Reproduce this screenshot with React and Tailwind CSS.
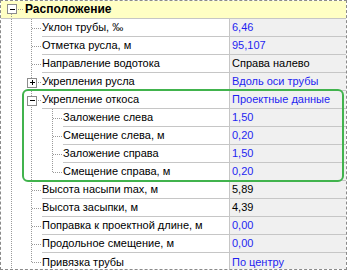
import React from 'react';

const rows = [
  { level: 1, name: 'Уклон трубы, ‰', value: '6,46', blue: true },
  { level: 1, name: 'Отметка русла, м', value: '95,107', blue: true },
  { level: 1, name: 'Направление водотока', value: 'Справа налево' },
  { level: 1, name: 'Укрепления русла', value: 'Вдоль оси трубы', blue: true, box: 'plus' },
  { level: 1, name: 'Укрепление откоса', value: 'Проектные данные', blue: true, box: 'minus' },
  { level: 2, name: 'Заложение слева', value: '1,50', blue: true },
  { level: 2, name: 'Смещение слева, м', value: '0,20', blue: true },
  { level: 2, name: 'Заложение справа', value: '1,50', blue: true },
  { level: 2, name: 'Смещение справа, м', value: '0,20', blue: true, last: true },
  { level: 1, name: 'Высота насыпи max, м', value: '5,89' },
  { level: 1, name: 'Высота засыпки, м', value: '4,39' },
  { level: 1, name: 'Поправка к проектной длине, м', value: '0,00', blue: true },
  { level: 1, name: 'Продольное смещение, м', value: '0,00', blue: true },
  { level: 1, name: 'Привязка трубы', value: 'По центру', blue: true, last: true },
];

const DOT = '#9a9a9a';

// +/- expander drawn at (cx, cy)
const Expander = ({ cx, cy, minus }) => (
  <g>
    <rect x={cx - 4.5} y={cy - 4.5} width="9" height="9" fill="#fff" stroke="#8c8c8c" />
    <line x1={cx - 2} y1={cy} x2={cx + 3} y2={cy} stroke="#000" />
    {!minus && <line x1={cx + 0.5} y1={cy - 2.5} x2={cx + 0.5} y2={cy + 2.5} stroke="#000" />}
  </g>
);

// one indent column of the tree: pipe, tee or ell, optionally with an expander
const Cell = ({ kind, box, w = 21 }) => (
  <svg width={w} height="18" className="shrink-0 block" shapeRendering="crispEdges">
    <line x1="10.5" y1="0" x2="10.5" y2={kind === 'ell' ? 9.5 : 18} stroke={DOT} strokeDasharray="1 1" />
    {kind !== 'pipe' && <line x1="11" y1="9.5" x2={w} y2="9.5" stroke={DOT} strokeDasharray="1 1" />}
    {box && <Expander cx={10.5} cy={9.5} minus={box === 'minus'} />}
  </svg>
);

const Row = ({ row, isEnd }) => {
  const line = isEnd ? '' : 'border-b border-[#c6c6c6]';
  const branch = row.last ? 'ell' : 'tee';
  return (
    <div className="flex h-[18px]">
      <div className="flex w-[228px] shrink-0 bg-white">
        <Cell kind="pipe" w={20} />
        {row.level === 1 ? (
          <Cell kind={branch} box={row.box} />
        ) : (
          <>
            <Cell kind="pipe" />
            <Cell kind={branch} />
          </>
        )}
        <div className={`flex-1 flex items-center text-black whitespace-nowrap ${line}`}>{row.name}</div>
      </div>
      <div
        className={`flex-1 flex items-center pl-[2px] bg-[#f0f0f0] border-l border-[#c6c6c6] whitespace-nowrap ${line} ${
          row.blue ? 'text-[#1f1ff0]' : 'text-black'
        }`}
      >
        {row.value}
      </div>
    </div>
  );
};

export default function App() {
  return (
    <div className="relative w-[347px] h-[270px] bg-white border border-dashed border-[#8a8a8a] text-[11px] leading-[17px] font-['Liberation_Sans',Arial,sans-serif] overflow-hidden">
      {/* section header */}
      <div className="flex h-[18px] bg-[#ffffc4] border-b border-[#c6c6c6]">
        <svg width="23" height="17" className="shrink-0 block" shapeRendering="crispEdges">
          <line x1="10.5" y1="13" x2="10.5" y2="17" stroke={DOT} strokeDasharray="1 1" />
          <line x1="15" y1="8.5" x2="23" y2="8.5" stroke={DOT} strokeDasharray="1 1" />
          <Expander cx={10.5} cy={8} minus />
        </svg>
        <div className="flex items-center pl-[1px] text-[12px] font-bold text-black">Расположение</div>
      </div>

      {rows.map((r, i) => (
        <Row key={i} row={r} isEnd={i === rows.length - 1} />
      ))}

      {/* highlight around the slope block */}
      <div className="absolute left-[21px] top-[88px] w-[322px] h-[93px] border-2 border-[#41b34d] rounded-[6px] pointer-events-none" />
    </div>
  );
}
